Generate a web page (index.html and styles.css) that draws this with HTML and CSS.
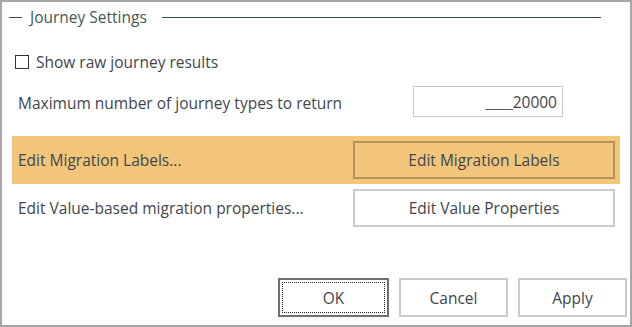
FILE: index.html
```html
<!DOCTYPE html>
<html lang="en">

<head>
    <meta charset="UTF-8">
    <title>Journey Settings</title>
    <link rel="stylesheet" href="styles.css">
</head>

<body>
    <div class="dialog">
        <div class="legend">
            <span class="legend-line short"></span>
            <span class="legend-text">Journey Settings</span>
            <span class="legend-line"></span>
        </div>

        <label class="check-row">
            <span class="check-box"></span>
            <span>Show raw journey results</span>
        </label>

        <div class="field-row">
            <span class="field-label">Maximum number of journey types to return</span>
            <div class="text-input"><span class="blank">____</span>20000</div>
        </div>

        <div class="action-row highlight">
            <span class="action-label">Edit Migration Labels...</span>
            <button class="text-button active">Edit Migration Labels</button>
        </div>

        <div class="action-row">
            <span class="action-label">Edit Value-based migration properties...</span>
            <button class="text-button">Edit Value Properties</button>
        </div>

        <div class="footer">
            <button class="text-button small default"><span class="focus">OK</span></button>
            <button class="text-button small">Cancel</button>
            <button class="text-button small">Apply</button>
        </div>
    </div>
</body>

</html>
```

FILE: styles.css
```css
body {
    margin: 0;
    background-color: white;
    font-family: "Open Sans", "Noto Sans", sans-serif;
    font-size: 15.5px;
    color: #41464d;
}

.dialog {
    width: 632px;
    height: 327px;
    box-sizing: border-box;
    border: 2px solid #a7a7a7;
    padding: 5px 3px 0 7px;
    display: flex;
    flex-direction: column;
}

.legend {
    display: flex;
    align-items: center;
    height: 20px;
    margin-right: 26px;
}

.legend-line {
    flex: 1;
    height: 1px;
    background-color: #34513f;
}

.legend-line.short {
    flex: none;
    width: 13px;
}

.legend-text {
    color: #3f5a52;
    padding: 0 15px 0 8px;
}

.check-row {
    display: flex;
    align-items: center;
    height: 20px;
    margin: 25px 0 0 6px;
}

.check-box {
    width: 12px;
    height: 12px;
    border: 1px solid #333;
    margin-right: 7px;
}

.field-row {
    display: flex;
    align-items: center;
    height: 31px;
    margin: 14px 0 0 9px;
}

.field-label {
    width: 395px;
    padding-top: 3px;
}

.text-input {
    width: 150px;
    height: 31px;
    box-sizing: border-box;
    border: 1px solid #c9c9c9;
    padding: 0 5px;
    display: flex;
    align-items: center;
    justify-content: flex-end;
}

.blank {
    color: #555;
}

.action-row {
    display: flex;
    align-items: center;
    padding: 5px 5px 5px 6px;
    margin: 0 7px 0 3px;
}

.highlight {
    margin-top: 19px;
    background-color: #f2c57a;
}

.action-label {
    flex: 1;
}

.text-button {
    font-family: inherit;
    font-size: 15.5px;
    color: #41464d;
    background-color: white;
    border: 2px solid #cacaca;
    width: 262px;
    height: 38px;
    padding: 0;
}

.text-button.active {
    background-color: #f2c57a;
    border-color: #b2905a;
}

.footer {
    display: flex;
    justify-content: flex-end;
    gap: 10px;
    margin-top: 46px;
}

.text-button.small {
    width: 109px;
    height: 39px;
}

.text-button.default {
    width: 111px;
    border-color: #707070;
    padding: 2px;
}

.focus {
    display: flex;
    align-items: center;
    justify-content: center;
    height: 100%;
    box-sizing: border-box;
    border: 1px dotted #222;
}
```
